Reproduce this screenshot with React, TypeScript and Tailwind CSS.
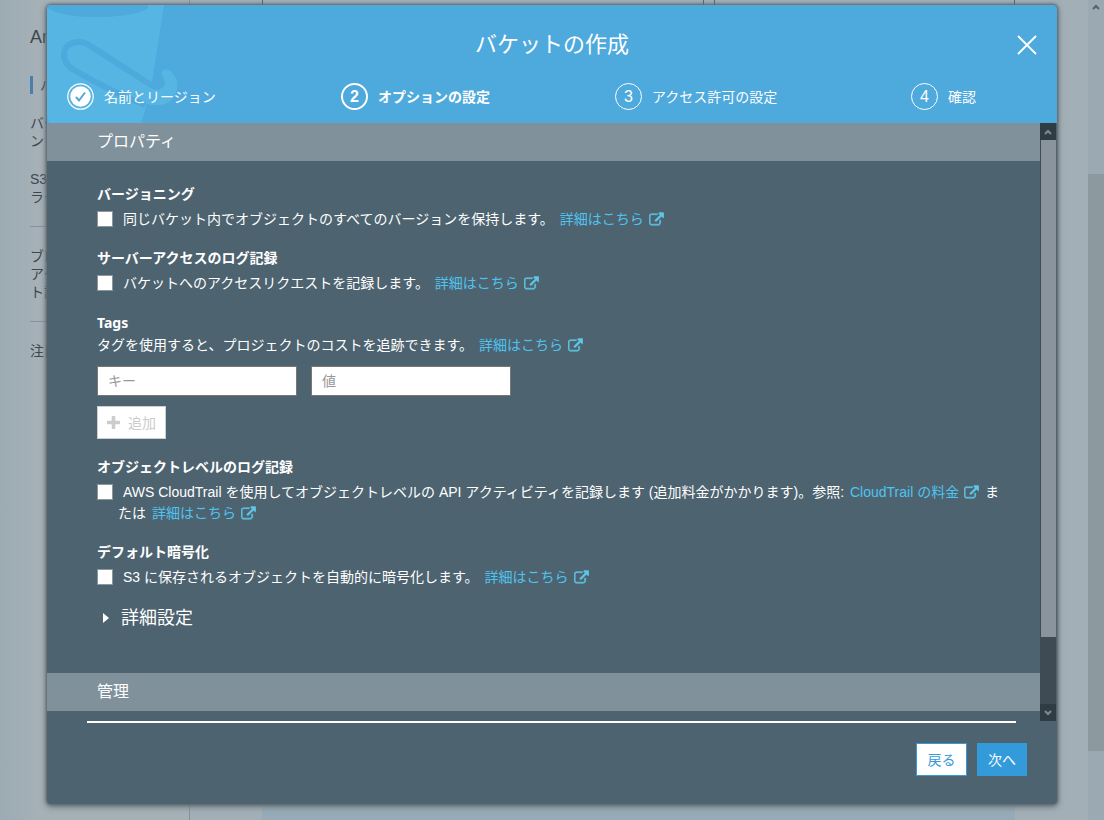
import { ReactNode } from 'react';

const STEPS = ['名前とリージョン', 'オプションの設定', 'アクセス許可の設定', '確認'];

function BucketArt() {
  return (
    <svg className="absolute left-0 top-0" width="140" height="118" viewBox="0 0 140 118" aria-hidden="true">
      <path d="M0 0H117L105 78L112 84C119 83 119 76 115 71C113 66 118 62 122 65C131 70 132 83 128 90C123 100 112 102 99 99L98 106L94 118H2L0 110Z" fill="#56b5e2" />
      <path d="M0 3C10 9 26 12 48 12C72 12 94 9 101 3V0H0Z" fill="#4ea9dd" />
      <path d="M98 100C72 90 46 76 27 65C12 56 14 37 32 37C37 37 41 39 45 42L104 80C109 83 114 82 116 77" fill="none" stroke="#4ea9dd" strokeWidth="6" />
    </svg>
  );
}

function MoreLink({ children = '詳細はこちら' }: { children?: ReactNode }) {
  return (
    <a href="#" className="ml-[2px] text-[#4fc3ef]">
      {children}
      <svg
        className="inline-block ml-[5px] mr-[2px] mb-[2px]"
        width="15"
        height="14"
        viewBox="-20 -40 1832 1640"
        fill="#5fc6e6"
        stroke="#5fc6e6"
        strokeWidth="70"
        aria-hidden="true"
      >
        <path d="M1408 928v320q0 119-84.5 203.5t-203.5 84.5h-832q-119 0-203.5-84.5t-84.5-203.5v-832q0-119 84.5-203.5t203.5-84.5h704q14 0 23 9t9 23v64q0 14-9 23t-23 9h-704q-66 0-113 47t-47 113v832q0 66 47 113t113 47h832q66 0 113-47t47-113v-320q0-14 9-23t23-9h64q14 0 23 9t9 23zm384-864v512q0 26-19 45t-45 19-45-19l-176-176-652 652q-10 10-23 10t-23-10l-114-114q-10-10-10-23t10-23l652-652-176-176q-19-19-19-45t19-45 45-19h512q26 0 45 19t19 45z" />
      </svg>
    </a>
  );
}

function Option({ id, title, children }: { id: string; title: string; children: ReactNode }) {
  return (
    <section className="mb-[18px]">
      <h3 className="font-bold leading-[21px]">{title}</h3>
      <div className="flex items-start mt-1">
        <input id={id} type="checkbox" className="appearance-none mt-[2px] w-4 h-4 bg-white border border-[#8b979e] shrink-0" />
        <label htmlFor={id} className="pl-[5px] indent-[5px] leading-[21px]">
          {children}
        </label>
      </div>
    </section>
  );
}

function SectionBar({ children }: { children: ReactNode }) {
  return <h2 className="h-[38px] pl-[50px] bg-[#80919c] text-base leading-[38px]">{children}</h2>;
}

function Chevron({ up = false, color }: { up?: boolean; color: string }) {
  return (
    <svg width="8" height="6" viewBox="0 0 8 6" fill="none" stroke={color} strokeWidth="2" aria-hidden="true">
      <path d={up ? 'M1 5L4 2L7 5' : 'M1 1L4 4L7 1'} />
    </svg>
  );
}

function Backdrop() {
  return (
    <div className="absolute inset-0 flex bg-[#a3afb7] text-[#3c474e] text-sm">
      <aside className="w-[190px] pl-[30px] border-r border-[#87939c] whitespace-nowrap bg-linear-to-r from-[#9dabb4] to-[#a5b0b7] to-20%">
        <p className="pt-6 text-lg leading-[26px]">Am</p>
        <p className="mt-[26px] h-[18px] pl-[7px] border-l-3 border-[#4a80a8] leading-[18px]">バ</p>
        <p className="mt-5 leading-[18px]">バー<br />ン</p>
        <p className="mt-5 leading-[18px]">S3<br />ラー</p>
        <hr className="my-5 border-[#87939c]" />
        <p className="leading-[18px]">ブロ<br />アク<br />ト設</p>
        <hr className="my-5 border-[#87939c]" />
        <p className="leading-[18px]">注目</p>
      </aside>
      <main className="flex-1 flex flex-col pl-[72px] pr-[73px]">
        <div className="flex-1 flex gap-[10px]">
          <div className="flex-[442] border-x border-[#59656d]" />
          <div className="flex-[300] border-x border-[#59656d]" />
        </div>
        <div className="h-8 bg-[#96abb7]" />
      </main>
      <div className="w-4 flex flex-col items-center bg-[#9ba9b2]">
        <div className="h-[174px] pt-1">
          <Chevron up color="#56636b" />
        </div>
        <div className="w-full h-[577px] bg-[#8c999f]" />
      </div>
    </div>
  );
}

export default function App() {
  return (
    <div className="relative min-h-screen overflow-hidden font-['Liberation_Sans','Noto_Sans_CJK_JP',sans-serif]">
      <Backdrop />
      <div
        role="dialog"
        aria-labelledby="dialog-title"
        className="relative mx-[47px] mt-[5px] rounded overflow-hidden bg-[#4d6370] text-white text-sm shadow-[0_0_3px_1px_#5c666d,0_2px_6px_1px_#6b757c]"
      >
        <header className="relative h-[118px] bg-[#4ea9dd]">
          <BucketArt />
          <h1 id="dialog-title" className="relative pt-6 text-center text-[22px] leading-8">
            バケットの作成
          </h1>
          <button type="button" aria-label="閉じる" className="absolute right-5 top-[30px]">
            <svg width="20" height="20" viewBox="0 0 20 20" stroke="white" strokeWidth="1.8" aria-hidden="true">
              <path d="M1 1L19 19M19 1L1 19" />
            </svg>
          </button>
          <ol className="relative mt-[22px] grid grid-cols-[274fr_274fr_296fr_146fr] pl-5">
            {STEPS.map((step, i) => (
              <li key={step} className={`flex items-center gap-[10px] ${i === 1 ? 'font-bold' : ''}`}>
                {i === 0 ? (
                  <svg width="27" height="27" viewBox="0 0 27 27" fill="none" aria-hidden="true">
                    <circle cx="13.5" cy="13.5" r="12.7" stroke="white" strokeWidth="1.2" />
                    <circle cx="13.5" cy="13.5" r="10.2" fill="white" />
                    <path d="M9 14L12 17.5L18 9.5" stroke="#4ea9dd" strokeWidth="2" />
                  </svg>
                ) : (
                  <span
                    className={`w-[27px] h-[27px] rounded-full border-white text-center text-base ${
                      i === 1 ? 'border-2 leading-[23px]' : 'border leading-[25px]'
                    }`}
                  >
                    {i + 1}
                  </span>
                )}
                {step}
              </li>
            ))}
          </ol>
        </header>

        <div className="flex h-[598px] pr-px">
          <div className="flex-1">
            <SectionBar>プロパティ</SectionBar>
            <div className="h-[512px] pt-[23px] pl-[50px] pr-9">
              <Option id="versioning" title="バージョニング">
                同じバケット内でオブジェクトのすべてのバージョンを保持します。 <MoreLink />
              </Option>
              <Option id="access-log" title="サーバーアクセスのログ記録">
                バケットへのアクセスリクエストを記録します。 <MoreLink />
              </Option>
              <section className="mb-[18px]">
                <h3 className="font-bold leading-[21px] font-['Noto_Sans',sans-serif]">Tags</h3>
                <p className="mt-[2px] leading-[21px]">
                  タグを使用すると、プロジェクトのコストを追跡できます。 <MoreLink />
                </p>
                <div className="flex gap-[14px] mt-[10px]">
                  <input
                    aria-label="キー"
                    placeholder="キー"
                    className="w-[200px] h-[30px] px-[10px] bg-white border border-[#777] text-gray-900 placeholder:text-[#999]"
                  />
                  <input
                    aria-label="値"
                    placeholder="値"
                    className="w-[200px] h-[30px] px-[10px] bg-white border border-[#777] text-gray-900 placeholder:text-[#999]"
                  />
                </div>
                <button
                  type="button"
                  disabled
                  className="flex items-center gap-2 mt-[10px] h-[33px] px-[9px] bg-white border border-[#ccd0d3] text-[#ccc]"
                >
                  <svg width="13" height="13" viewBox="192 128 1408 1408" fill="currentColor" aria-hidden="true">
                    <path d="M1600 736v192q0 40-28 68t-68 28h-416v416q0 40-28 68t-68 28h-192q-40 0-68-28t-28-68v-416h-416q-40 0-68-28t-28-68v-192q0-40 28-68t68-28h416v-416q0-40 28-68t68-28h192q40 0 68 28t28 68v416h416q40 0 68 28t28 68z" />
                  </svg>
                  追加
                </button>
              </section>
              <Option id="object-log" title="オブジェクトレベルのログ記録">
                AWS CloudTrail を使用してオブジェクトレベルの API アクティビティを記録します (追加料金がかかります)。参照:{' '}
                <MoreLink>CloudTrail の料金</MoreLink> または <MoreLink />
              </Option>
              <Option id="encryption" title="デフォルト暗号化">
                S3 に保存されるオブジェクトを自動的に暗号化します。 <MoreLink />
              </Option>
              <button type="button" className="flex items-center gap-3 pl-[6px] text-lg leading-6">
                <svg width="6" height="10" viewBox="0 0 6 10" fill="white" aria-hidden="true">
                  <path d="M0 0L6 5L0 10Z" />
                </svg>
                詳細設定
              </button>
            </div>
            <SectionBar>管理</SectionBar>
          </div>
          <div className="w-4 flex flex-col bg-[#3e4b54]">
            <div className="h-[17px] flex items-center justify-center bg-[#303c44]">
              <Chevron up color="#7e8b93" />
            </div>
            <div className="h-[497px] ml-px bg-[#8a949c]" />
            <div className="mt-auto h-[17px] flex items-center justify-center bg-[#303c44]">
              <Chevron color="#7e8b93" />
            </div>
          </div>
        </div>

        <footer className="pb-7">
          <hr className="ml-10 mr-[41px] border-t-2 border-white" />
          <div className="flex justify-end gap-[10px] mt-5 pr-[30px]">
            <button type="button" className="h-[33px] w-[51px] bg-white border border-[#349bdb] text-[#349bdb]">
              戻る
            </button>
            <button type="button" className="h-[33px] w-[50px] bg-[#349bdb]">
              次へ
            </button>
          </div>
        </footer>
      </div>
    </div>
  );
}
